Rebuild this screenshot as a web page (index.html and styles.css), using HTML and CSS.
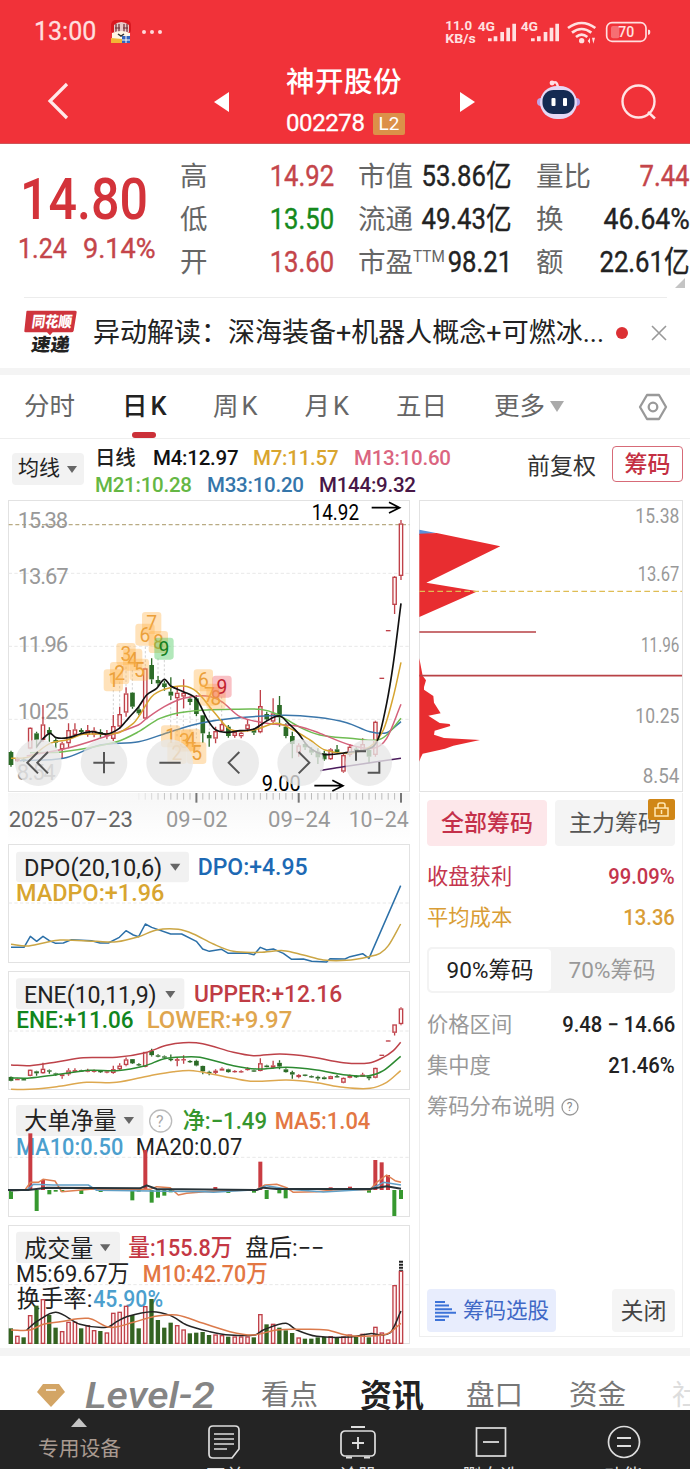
FILE: index.html
```html
<!DOCTYPE html>
<html lang="zh-CN">
<head>
<meta charset="utf-8">
<title>神开股份 002278</title>
<link rel="stylesheet" href="styles.css">
</head>
<body>
<header class="top">
  <div class="status">
    <span class="clock">13:00</span>
    <svg class="app" viewBox="0 0 22 24"><rect x="1" y="0" width="20" height="15" rx="5" fill="#d91820"/><path d="M4 5q7-6 15 0v7H4z" fill="#e9c9c9"/><path d="M6 4v8M9 4v8M14 4v8M17 4v8M5 8h5M13 8h5" stroke="#702c32" stroke-width="1.2"/><path d="M2 13q9-4 18 0v8H2z" fill="#fff5e4"/><path d="M8 14l3 2 3-2" stroke="#333" fill="none" stroke-width="1.5"/><path d="M1 18l11 1v4H1z" fill="#f3b634"/><path d="M12 16h8v7h-8z" fill="#3464bd"/><path d="M12 20h8M16 16v7" stroke="#fff"/></svg>
    <svg class="dots" viewBox="0 0 22 6"><g fill="#ffd9da"><circle cx="3" cy="3" r="2"/><circle cx="11" cy="3" r="2"/><circle cx="19" cy="3" r="2"/></g></svg>
    <svg class="signals" viewBox="295 50 630 90">
      <g fill="#ffe0e0" font-weight="700">
        <text x="302" y="90" font-size="41" textLength="80" lengthAdjust="spacingAndGlyphs">11.0</text>
        <text x="302" y="127" font-size="40" textLength="91" lengthAdjust="spacingAndGlyphs">KB/s</text>
        <text x="399" y="91" font-size="40" textLength="52" lengthAdjust="spacingAndGlyphs">4G</text>
        <text x="528" y="91" font-size="40" textLength="52" lengthAdjust="spacingAndGlyphs">4G</text>
        <path d="M430 114h11v9h-11zM447 108h11v15h-11zM467 95h11v28h-11zM485 82h11v41h-11zM503 70h11v53h-11z"/>
        <path d="M559 114h11v9h-11zM577 108h11v15h-11zM597 95h11v28h-11zM615 82h11v41h-11zM632 70h11v53h-11z"/>
        <circle cx="711" cy="121" r="8"/><path d="M729 122l7-10v18zM742 112l9 0-5 18z"/>
        <rect x="799" y="77" width="25" height="37" rx="6" opacity=".35"/>
        <path d="M910 88h3q4 0 4 7t-4 8h-3z"/>
        <text x="821" y="111" font-size="43" font-weight="500" textLength="48" lengthAdjust="spacingAndGlyphs">70</text>
      </g>
      <g fill="none" stroke="#ffe0e0" stroke-width="8"><path d="M670 83q41-30 82 0M682 97q29-22 58 0M694 110q17-14 34 0"/><rect x="786" y="67" width="118" height="56" rx="16" stroke-width="5"/></g>
    </svg>
  </div>
  <nav class="nav">
    <svg class="back" viewBox="0 0 24 40"><path d="M20 3L3 20l17 17" fill="none" stroke="#ffe9e9" stroke-width="3.2"/></svg>
    <svg class="prev" viewBox="0 0 15 20"><path d="M15 0v20L0 10z" fill="#fff"/></svg>
    <div class="name"><h1>神开股份</h1><p><span>002278</span><b>L2</b></p></div>
    <svg class="next" viewBox="0 0 15 20"><path d="M0 0v20L15 10z" fill="#fff"/></svg>
    <svg class="robot" viewBox="0 0 43 40"><path d="M15 4q5-5 6 4" fill="none" stroke="#ffdce4" stroke-width="2.5"/><circle cx="15" cy="3" r="2.4" fill="#ffdce4"/><circle cx="4" cy="22" r="4" fill="#bba3e8"/><circle cx="39" cy="22" r="4" fill="#bba3e8"/><rect x="3" y="6" width="37" height="33" rx="17" fill="#e5d8f5"/><rect x="5.500" y="10" width="32" height="24" rx="11" fill="#152a52"/><rect x="14.500" y="18" width="4" height="8" rx="1" fill="#fff"/><rect x="26" y="18" width="4" height="8" rx="1" fill="#fff"/></svg>
    <svg class="search" viewBox="0 0 36 36"><circle cx="17.500" cy="17.500" r="16" fill="none" stroke="#ffe4e4" stroke-width="2.400"/><path d="M27 28l7 6.500" stroke="#ffe4e4" stroke-width="2.400"/></svg>
  </nav>
</header>

<section class="quote">
  <div class="last">
    <div class="price"><span>14.80</span></div>
    <div class="change"><span class="c1">1.24</span><span class="c2">9.14%</span></div>
  </div>
  <dl class="facts">
    <div><dt>高</dt><dd class="up">14.92</dd></div><div><dt>市值</dt><dd>53.86亿</dd></div><div><dt>量比</dt><dd class="up">7.44</dd></div>
    <div><dt>低</dt><dd class="down">13.50</dd></div><div><dt>流通</dt><dd>49.43亿</dd></div><div><dt>换</dt><dd class="wide">46.64%</dd></div>
    <div><dt>开</dt><dd class="up">13.60</dd></div><div><dt>市盈<sup>TTM</sup></dt><dd>98.21</dd></div><div><dt>额</dt><dd>22.61亿</dd></div>
  </dl>
  <i class="corner"></i>
</section>

<section class="news">
  <svg class="newslogo" viewBox="0 0 159 132"><path d="M9 2h145q5 0 4 5l-9 55q-1 5-7 5H86l-8 9-9-9H5q-5 0-4-5l6-55q0-5 2-5z" fill="#cf343d"/><g font-weight="900" transform="skewX(-8)"><text x="29" y="52" font-size="45" fill="#fff" textLength="120" lengthAdjust="spacingAndGlyphs">同花顺</text><text x="37" y="124" font-size="54" fill="#222" textLength="116" lengthAdjust="spacingAndGlyphs">速递</text></g></svg>
  <p>异动解读：深海装备+机器人概念+可燃冰...</p><i class="reddot"></i>
  <svg class="close" viewBox="0 0 14 14"><path d="M0 0l14 14M14 0L0 14" stroke="#999" stroke-width="1.600"/></svg>
</section>

<nav class="periods">
  <a>分时</a><a class="on">日K</a><a class="k">周K</a><a class="k">月K</a><a class="five">五日</a><a class="more">更多</a><i class="tri big"></i>
  <svg class="hex" viewBox="0 0 28 28"><path d="M8 2h12l7 12-7 12H8L1 14z" fill="none" stroke="#999" stroke-width="2.300" stroke-linejoin="round"/><circle cx="14" cy="14" r="4.300" fill="none" stroke="#999" stroke-width="2.300"/></svg>
</nav>

<section class="legend">
  <div class="pick">均线<i class="tri"></i></div>
  <div class="mas">
    <div><span class="cn">日线</span><span class="m4">M4:12.97</span><span class="m7">M7:11.57</span><span class="m13">M13:10.60</span></div>
    <div><span class="m21">M21:10.28</span><span class="m33">M33:10.20</span><span class="m144">M144:9.32</span></div>
  </div>
  <span class="adj">前复权</span><span class="chipbtn">筹码</span>
</section>

<main class="body">
  <div class="left">
    <svg class="kline" viewBox="24 180 1206 879">
      <rect x="25.500" y="181.500" width="1203" height="873" class="frame"/>
      <path d="M26 400H1228M26 619H1228M26 838H1228" class="grid"/>
      <path d="M26 254H1228" stroke="#b9ab83" stroke-width="4" stroke-dasharray="12 8"/>
      <g fill="#999" font-size="66"><text x="53" y="263" textLength="151">15.38</text><text x="53" y="432" textLength="153">13.67</text><text x="53" y="636" textLength="151">11.96</text><text x="53" y="837" textLength="153">10.25</text><text x="50" y="1021" textLength="117">8.54</text></g>
      <path d="M340 750v100M359 725v90M378 680v70M397 690v65M436 620v60M474 655v60M493 660v60M512 775v90M531 830v60M550 800v80M570 790v90M589 825v70M628 800v70M665 770v70" stroke="#bbb" stroke-width="2" stroke-dasharray="7 6"/>
      <g id="candles"></g><g id="averages"></g><g id="marks"></g>
      <g fill="#000" font-size="66"><text x="935" y="241" textLength="142" lengthAdjust="spacingAndGlyphs">14.92</text><text x="785" y="1053" textLength="117" lengthAdjust="spacingAndGlyphs">9.00</text></g>
      <path d="M1115 203h84m-32-16l32 16-32 16M943 1037h86m-32-16l32 16-32 16" fill="none" stroke="#000" stroke-width="5"/>
      <g fill="#e7e7e7" fill-opacity=".78"><circle cx="115" cy="968" r="70"/><circle cx="312" cy="968" r="70"/><circle cx="509" cy="968" r="70"/><circle cx="707" cy="968" r="70"/><circle cx="902" cy="968" r="70"/><circle cx="1106" cy="968" r="70"/></g>
      <path d="M114 936l-32 32 32 32M144 936l-32 32 32 32M280 968h64M312 936v64M478 968h64M718 936l-32 32 32 32M896 936l32 32-32 32M1068 962v-28h30M1138 966v32h-35" fill="none" stroke="#555" stroke-width="6"/>
    </svg>
    <svg class="axis" viewBox="24 1056 1206 153"><g id="ticks"></g><g font-size="66" fill="#999"><text x="26" y="1159" fill="#666" textLength="373" lengthAdjust="spacingAndGlyphs">2025−07−23</text><text x="498" y="1159" textLength="185" lengthAdjust="spacingAndGlyphs">09−02</text><text x="804" y="1159" textLength="187" lengthAdjust="spacingAndGlyphs">09−24</text><text x="1046" y="1159" textLength="180" lengthAdjust="spacingAndGlyphs">10−24</text></g></svg>
    <svg class="panel" viewBox="24 10 1206 357">
      <rect x="25.500" y="11.500" width="1203" height="354" class="frame"/><path d="M26 187H1228" class="grid"/>
      <rect x="48" y="33" width="519" height="92" rx="10" class="tag"/><path d="M510 69h31l-15 21z" fill="#666"/>
      <g id="dpo"></g>
      <g font-size="70"><text x="72" y="107" fill="#222" textLength="415" lengthAdjust="spacingAndGlyphs">DPO(20,10,6)</text><text x="593" y="103" class="lab" fill="#1d69b4" textLength="330" lengthAdjust="spacingAndGlyphs">DPO:+4.95</text><text x="48" y="181" class="lab" fill="#d8a530" textLength="445" lengthAdjust="spacingAndGlyphs">MADPO:+1.96</text></g>
    </svg>
    <svg class="panel" viewBox="24 391 1206 357">
      <rect x="25.500" y="392.500" width="1203" height="354" class="frame"/><path d="M26 571H1228" class="grid"/>
      <rect x="48" y="413" width="505" height="93" rx="10" class="tag"/><path d="M496 451h30l-15 21z" fill="#666"/>
      <g id="ene"></g>
      <g font-size="70"><text x="72" y="488" fill="#222" textLength="398" lengthAdjust="spacingAndGlyphs">ENE(10,11,9)</text><text x="582" y="485" class="lab" fill="#c03c45" textLength="445" lengthAdjust="spacingAndGlyphs">UPPER:+12.16</text><text x="49" y="563" class="lab" fill="#11861d" textLength="352" lengthAdjust="spacingAndGlyphs">ENE:+11.06</text><text x="440" y="563" class="lab" fill="#dfa64e" textLength="437" lengthAdjust="spacingAndGlyphs">LOWER:+9.97</text></g>
    </svg>
    <svg class="panel" viewBox="24 9 1206 357">
      <rect x="25.500" y="10.500" width="1203" height="354" class="frame"/><path d="M26 187H1228" class="grid"/>
      <rect x="48" y="30" width="382" height="93" rx="10" class="tag"/><path d="M371 66h31l-15 21z" fill="#666"/>
      <circle cx="482" cy="78" r="33" fill="none" stroke="#bbb" stroke-width="4"/><text x="468" y="95" font-size="48" fill="#aaa">?</text>
      <g font-size="70"><text x="73" y="103" fill="#222" textLength="277" lengthAdjust="spacingAndGlyphs">大单净量</text><text x="548" y="102" class="lab" fill="#36962e" textLength="253" lengthAdjust="spacingAndGlyphs">净:−1.49</text><text x="824" y="102" class="lab" fill="#e37743" textLength="287" lengthAdjust="spacingAndGlyphs">MA5:1.04</text><text x="48" y="180" class="lab" fill="#4c9fce" textLength="322" lengthAdjust="spacingAndGlyphs">MA10:0.50</text><text x="407" y="180" fill="#222" textLength="320" lengthAdjust="spacingAndGlyphs">MA20:0.07</text></g>
      <g id="flow"></g>
    </svg>
    <svg class="panel" viewBox="24 390 1206 357">
      <rect x="25.500" y="391.500" width="1203" height="354" class="frame"/><path d="M26 569H1228" class="grid"/>
      <rect x="48" y="410" width="312" height="94" rx="10" class="tag"/><path d="M300 448h31l-15 21z" fill="#666"/>
      <g font-size="70"><text x="73" y="485" fill="#222" textLength="207" lengthAdjust="spacingAndGlyphs">成交量</text><text x="385" y="484" class="lab" fill="#c43844" textLength="312" lengthAdjust="spacingAndGlyphs">量:155.8万</text><text x="736" y="484" fill="#222" textLength="237" lengthAdjust="spacingAndGlyphs">盘后:−−</text><text x="48" y="560" fill="#222" textLength="340" lengthAdjust="spacingAndGlyphs">M5:69.67万</text><text x="428" y="560" class="lab" fill="#e37743" textLength="375" lengthAdjust="spacingAndGlyphs">M10:42.70万</text><text x="50" y="637" fill="#222" textLength="227" lengthAdjust="spacingAndGlyphs">换手率:</text><text x="280" y="637" class="lab" fill="#4c9fce" textLength="209" lengthAdjust="spacingAndGlyphs">45.90%</text></g>
      <g id="volume"></g>
    </svg>
  </div>

  <aside class="right">
    <svg class="dist" viewBox="27 180 795 879">
      <rect x="28.500" y="181.500" width="789" height="873" class="frame"/>
      <path d="M28 269l50 10-50 6z" fill="#5b8fd8"/>
      <path d="M28 281l52-2 191 40L49 428l154 26L28 531z" fill="#e82d30"/>
      <path d="M28 655l10 52 10 14-6 20v8l28 19 2 20 20 32-37 7 34 22 30 3 2 6-47 14-2 12 30 10 108 6-80 17-25 9-67 15-6 12-4 12z" fill="#e82d30"/>
      <path d="M28 576h350M28 707h788" stroke="#b84246" stroke-width="5"/>
      <path d="M28 454h788" stroke="#dfbd54" stroke-width="4" stroke-dasharray="17 10"/>
      <g fill="#999" font-size="59"><text x="676" y="248" textLength="132" lengthAdjust="spacingAndGlyphs">15.38</text><text x="683" y="424" textLength="125" lengthAdjust="spacingAndGlyphs">13.67</text><text x="693" y="636" textLength="115" lengthAdjust="spacingAndGlyphs">11.96</text><text x="676" y="850" textLength="132" lengthAdjust="spacingAndGlyphs">10.25</text><text x="698" y="1028" textLength="110" lengthAdjust="spacingAndGlyphs">8.54</text></g>
    </svg>
    <div class="chips">
      <div class="scope"><span class="all">全部筹码</span><span class="main">主力筹码<svg class="lock" viewBox="0 0 27 21"><rect width="27" height="21" rx="2" fill="#d08616"/><path d="M7 9h13v8H7zM10 9V6q0-2 2-2h3q2 0 2 2v3M13.500 11v4" fill="none" stroke="#ffe8b4" stroke-width="1.500"/></svg></span></div>
      <div class="row red"><span>收盘获利</span><b>99.09%</b></div>
      <div class="row gold"><span>平均成本</span><b>13.36</b></div>
      <div class="seg"><span class="sel">90%筹码</span><span>70%筹码</span></div>
      <div class="row"><span>价格区间</span><b>9.48 − 14.66</b></div>
      <div class="row"><span>集中度</span><b>21.46%</b></div>
      <div class="row help"><span>筹码分布说明</span><svg viewBox="0 0 18 18"><circle cx="9" cy="9" r="8" fill="none" stroke="#999" stroke-width="1.300"/><text x="5.800" y="13" font-size="12" fill="#888">?</text></svg></div>
      <div class="foot"><span class="screen"><svg viewBox="0 0 22 20"><path d="M0 1h10M0 4.600h14M0 8.200h17M0 11.800h21M0 15.400h14M0 19h10" stroke="#3d73d8" stroke-width="2"/></svg>筹码选股</span><span class="shut">关闭</span></div>
    </div>
  </aside>
</main>

<nav class="info">
  <svg class="gem" viewBox="0 0 28 23"><path d="M6 0h16l6 8-14 15L0 8z" fill="#d3a565"/><path d="M9 6h10" stroke="#fff" stroke-width="1.500"/></svg>
  <svg class="level" viewBox="0 0 132 30"><text x="0" y="27" font-size="36" font-weight="500" font-style="italic" fill="#858585" textLength="130" lengthAdjust="spacingAndGlyphs">Level-2</text></svg>
  <a>看点</a><a class="cur">资讯</a><a>盘口</a><a>资金</a><a class="faded">社</a>
</nav>

<footer class="dock">
  <div class="device"><i></i><span>专用设备</span></div>
  <div class="cell"><svg viewBox="0 0 36 34"><path d="M6 1h22q4 0 4 4v19l-7 9H6q-4 0-4-4V5q0-4 4-4zM7 9h20M7 14h20M7 19h20M7 24h13" fill="none" stroke="#ddd" stroke-width="1.700"/></svg><span>下单</span></div>
  <div class="cell"><svg viewBox="0 0 36 34"><rect x="1" y="6" width="34" height="25" rx="4" fill="none" stroke="#ddd" stroke-width="1.700"/><path d="M11 2h14M18 12v12M12 18h12M6 32.500h6M24 32.500h6" fill="none" stroke="#ddd" stroke-width="1.900"/></svg><span>诊股</span></div>
  <div class="cell"><svg viewBox="0 0 36 34"><rect x="3.500" y="3" width="29" height="28" fill="none" stroke="#ddd" stroke-width="1.700"/><path d="M10 17h16" stroke="#ddd" stroke-width="1.800"/></svg><span>删自选</span></div>
  <div class="cell"><svg viewBox="0 0 36 34"><circle cx="18" cy="17" r="15.500" fill="none" stroke="#ddd" stroke-width="1.700"/><path d="M11 13h14M11 21h14" stroke="#ddd" stroke-width="1.800"/></svg><span>功能</span></div>
</footer>
<script src="charts.js"></script>
</body>
</html>
```
FILE: styles.css
```css
* { box-sizing: border-box; }
body { margin: 0; width: 690px; height: 1469px; overflow: hidden; background: #fff; color: #222; font-family: Roboto, "Noto Sans CJK SC", sans-serif; line-height: 1.2; }
svg { display: block; flex: none; overflow: visible; }
svg text { font-family: Roboto, "Noto Sans CJK SC", sans-serif; white-space: pre; }
h1, p, dl, dd, dt { margin: 0; font-weight: 400; }
span, a, p, dt, dd, b { white-space: nowrap; }

.top { height: 144px; background: #f13239; color: #fff; border-bottom: 1px solid #cf5558; }
.status { height: 62px; display: flex; align-items: center; padding: 2px 0 0 34px; }
.clock { width: 76px; font-size: 25px; color: #ffdfdf; -webkit-text-stroke: .3px; }
.app { width: 22px; height: 24px; }
.dots { width: 22px; height: 6px; margin-left: 9px; }
.signals { width: 210px; height: 30px; margin-left: 280px; }
.nav { height: 81px; display: flex; align-items: center; padding-left: 47px; }
.back { width: 24px; height: 40px; margin-top: -4px; }
.prev { width: 15px; height: 20px; margin: -2px 0 0 143px; }
.name { width: 119px; margin-left: 57px; }
.name h1 { font-size: 28.500px; line-height: 42px; font-weight: 500; letter-spacing: .5px; }
.name p { display: flex; align-items: center; height: 40px; font-size: 24px; }
.name p span { width: 87px; letter-spacing: -.4px; -webkit-text-stroke: .3px; }
.name b { width: 32px; height: 22px; line-height: 22px; border-radius: 2px; background: #dc9049; text-align: center; font-size: 19px; font-weight: 400; }
.next { width: 15px; height: 20px; margin: -2px 0 0 55px; }
.robot { width: 43px; height: 40px; margin: -5px 0 0 62px; }
.search { width: 36px; height: 36px; margin: -1px 0 0 41px; }

.quote { position: relative; height: 153px; display: flex; padding-top: 11px; }
.last { width: 180px; color: #c9353c; }
.price { height: 88px; padding-left: 20px; line-height: 90px; font-size: 57px; font-weight: 500; color: #d3333a; }
.price span { display: inline-block; transform: scaleX(.88); transform-origin: left; }
.change { height: 26px; display: flex; padding-left: 18px; line-height: 12px; font-size: 28.500px; color: #c4454a; -webkit-text-stroke: .4px; }
.change span { transform-origin: left; }
.c1 { width: 65px; transform: scaleX(.88); }
.c2 { transform: scaleX(.95); }
.facts { width: 510px; display: grid; grid-template-columns: repeat(3, 154px); column-gap: 24px; grid-auto-rows: 43px; line-height: 43px; }
.facts div { display: flex; justify-content: space-between; }
.facts dt { width: 0; flex: none; font-size: 27.500px; color: #666; }
.facts sup { display: inline-block; font-size: 17px; vertical-align: 10px; line-height: 1; transform: scaleX(.9); transform-origin: left; }
.facts dd { font-size: 29.500px; transform: scaleX(.87); transform-origin: right; -webkit-text-stroke: .4px; }
.facts .wide { transform: scaleX(.9); }
.up { color: #c4454a; }
.down { color: #15891c; }
.corner { position: absolute; right: 5px; bottom: 9px; border-left: 10px solid transparent; border-bottom: 10px solid #c4c4c4; }

.news { height: 71px; display: flex; align-items: center; margin-left: 24px; }
.news::before { content: ""; width: 643px; height: 1px; margin-right: -643px; align-self: flex-start; background: #ececec; }
.newslogo { width: 53px; height: 44px; margin-top: -2px; }
.news p { width: 523px; margin-left: 16px; padding-top: 1px; font-size: 27px; }
.reddot { width: 12px; height: 12px; border-radius: 50%; background: #dc3034; }
.close { width: 14px; height: 14px; margin-left: 24px; }

.periods { height: 71px; display: flex; align-items: center; padding-left: 24px; border-top: 7px solid #f4f4f4; border-bottom: 1px solid #eee; font-size: 25.500px; color: #666; }
.periods a { width: 98px; }
.periods .on { position: relative; width: 91px; color: #222; font-weight: 500; letter-spacing: 3px; }
.periods .on::after { content: ""; position: absolute; left: 10px; bottom: -16px; width: 24px; height: 6px; border-radius: 3px; background: #cb3038; }
.periods .k { width: 91.500px; letter-spacing: 3px; }
.periods .five { width: 98px; }
.periods .more { width: 56px; }
.tri { width: 0; height: 0; border: 5px solid transparent; border-top: 7px solid #666; border-bottom: 0; }
.tri.big { border-width: 11px 7px 0; border-top-color: #aaa; }
.hex { width: 28px; height: 28px; margin-left: 75px; }

.legend { height: 61px; display: flex; padding-left: 12px; }
.legend > * { flex: none; }
.pick { width: 72px; height: 32px; margin-top: 14px; padding-left: 6px; border-radius: 4px; background: #f2f2f2; display: flex; align-items: center; gap: 7px; font-size: 21px; white-space: nowrap; }
.mas { width: 443px; padding: 6px 0 0 11px; font-size: 20.500px; font-weight: 500; letter-spacing: -.25px; }
.mas div { display: flex; height: 27px; line-height: 27px; gap: 15px; }
.mas .cn { width: 43px; font-weight: 500; }
.m4 { color: #111; width: 85px; } .m7 { color: #d9a52e; width: 86px; } .m13 { color: #db6580; }
.m21 { color: #65b744; width: 97px; } .m33 { color: #3576aa; width: 97px; } .m144 { color: #481747; }
.adj { margin-top: 14px; font-size: 23px; color: #333; width: 85px; }
.chipbtn { width: 71px; height: 36px; margin-top: 7px; line-height: 36px; text-align: center; border: 1px solid #d76b78; border-radius: 4px; color: #c42f42; font-size: 23px; font-weight: 500; }

.body { display: flex; height: 848px; padding-left: 8px; gap: 9px; }
.left { width: 402px; }
.kline { width: 402px; height: 293px; }
.axis { width: 402px; height: 51px; background: linear-gradient(#f7f7f7, #fff); }
.panel { width: 402px; height: 119px; margin-bottom: 8px; }
.frame { fill: none; stroke: #e2e2e2; stroke-width: 3; }
.grid { stroke: #e8e8e8; stroke-width: 3; stroke-dasharray: 10 7; fill: none; }
.tag { fill: #f1f1f1; }
.panel text { stroke-width: .9; stroke: currentColor; stroke-opacity: 0; }
.panel .lab { font-weight: 500; }
.right { width: 265px; }
.dist { width: 265px; height: 293px; }
.chips { width: 264px; height: 544px; border: 1px solid #eee; border-top: 0; padding: 7px 7px 0; }
.scope { display: flex; justify-content: space-between; font-size: 23px; line-height: 48px; text-align: center; margin-bottom: 10px; }
.scope span { width: 120px; height: 46px; border-radius: 4px; }
.all { background: #fde7ea; color: #c4304a; font-weight: 500; }
.main { position: relative; background: #f4f4f4; color: #555; }
.lock { position: absolute; right: 0; top: -1px; width: 27px; height: 21px; }
.row { height: 41px; display: flex; align-items: center; justify-content: space-between; font-size: 21.300px; color: #999; }
.row b { font-weight: 500; font-size: 21.500px; color: #222; transform: scaleX(.94); transform-origin: right; }
.row.red, .row.red b { color: #c4354d; }
.row.gold, .row.gold b { color: #d99d36; }
.seg { height: 46px; margin: 9px 0 11px; padding: 2px; display: flex; border-radius: 5px; background: #f3f3f3; font-size: 22.500px; line-height: 43px; text-align: center; color: #999; }
.seg span { flex: 1; }
.seg .sel { background: #fff; border-radius: 4px; color: #222; }
.help { justify-content: flex-start; gap: 6px; }
.help svg { width: 18px; height: 18px; }
.foot { display: flex; justify-content: space-between; margin-top: 162px; font-size: 21.500px; line-height: 45px; }
.screen { width: 129px; height: 43px; display: flex; align-items: center; gap: 6px; padding-left: 8px; border-radius: 4px; background: #e8edfd; color: #4068c6; }
.screen svg { width: 22px; height: 20px; }
.shut { width: 63px; height: 43px; border-radius: 4px; background: #f5f5f5; text-align: center; font-size: 23px; color: #444; }

.info { height: 62px; display: flex; padding-left: 37px; border-top: 8px solid #f4f4f4; font-size: 28.500px; line-height: 80px; color: #777; overflow: hidden; }
.gem { width: 28px; height: 23px; margin-top: 28px; }
.level { width: 132px; height: 30px; margin: 25px 0 0 20px; }
.info a { flex: none; width: 103px; }
.info .level + a { width: 99px; margin-left: 44px; }
.info .cur { width: 106px; font-size: 32px; font-weight: 700; color: #222; }
.info .faded { color: #ddd; }

.dock { height: 59px; display: flex; background: #242424; color: #ddd; overflow: hidden; }
.device { width: 159px; display: flex; flex-direction: column; align-items: center; color: #a99a90; font-size: 20.800px; line-height: 45px; padding-top: 8px; }
.device i { border: 8px solid transparent; border-top: 0; border-bottom: 9px solid #c4c4c4; }
.cell { width: 132.800px; display: flex; flex-direction: column; align-items: center; padding-top: 15px; font-size: 19px; }
.cell svg { width: 36px; height: 34px; }
.cell span { margin-top: 4px; line-height: 28px; }
```
FILE: charts.js
```js
// Candles: [direction, high, body top, body bottom, low]; one every STEP units.
const START = 33, STEP = 19.18;
const UP = '#bf4149', DOWN = '#2c6b27';
const candles = [
  ['g',932,936,975,980],['r',952,956,964,966],['g',955,958,962,966],['r',862,863,926,928],['g',875,880,900,925],
  ['r',795,853,900,905],['g',862,870,880,905],['g',895,900,908,925],['r',905,910,928,955],['r',850,870,910,925],
  ['r',850,868,885,890],['g',865,870,876,882],['r',855,870,884,890],['r',862,872,884,892],['g',868,876,881,893],
  ['r',870,880,889,898],['r',825,858,897,903],['r',800,822,860,866],['r',742,760,818,830],['g',757,758,800,806],
  ['g',800,808,820,826],['r',683,685,836,838],['g',655,675,718,732],['g',708,720,730,738],['g',722,730,741,752],
  ['g',712,755,767,780],['r',740,758,775,828],['r',718,758,770,805],['g',770,776,786,795],['g',765,775,822,828],
  ['g',825,826,880,908],['g',875,885,895,920],['r',860,873,896,910],['r',840,852,873,875],['g',855,860,888,893],
  ['r',870,876,888,893],['r',870,878,889,895],['r',840,853,868,875],['g',865,870,878,885],['r',750,798,877,880],
  ['g',815,822,838,842],['r',775,820,845,855],['g',768,795,832,860],['g',850,860,888,895],['g',875,888,912,955],
  ['r',910,916,938,950],['g',908,912,922,930],['g',922,928,938,945],['g',925,935,952,972],['g',932,940,958,962],
  ['r',925,928,958,960],['g',915,928,936,940],['r',940,945,995,998],['r',912,920,945,950],['g',918,926,936,944],
  ['r',895,912,934,936],['g',925,930,950,970],['r',842,845,945,950],['r',713,713,716,717],['r',570,570,572,573],
  ['r',408,410,495,522],['r',240,250,408,420]
];
const el = id => document.getElementById(id);
const xAt = i => START + i * STEP;
const rect = (x, y, w, h, fill, stroke) =>
  `<rect x="${x}" y="${y}" width="${w}" height="${Math.max(h, 0)}" fill="${fill}"${stroke ? ` stroke="${stroke}" stroke-width="4"` : ''}/>`;
const line = (pts, color, width = 4.5) =>
  `<polyline points="${pts}" fill="none" stroke="${color}" stroke-width="${width}" stroke-linejoin="round"/>`;

function curve(text, color, width = 4.5) {
  const p = text.split(' ').map(s => s.split(',').map(Number));
  let d = `M${p[0]}`;
  for (let i = 0; i < p.length - 1; i++) {
    const a = p[i - 1] || p[i], b = p[i], c = p[i + 1], e = p[i + 2] || c;
    const k = (c[0] - b[0]) / 3;
    const s1 = (c[1] - a[1]) / (c[0] - a[0]), s2 = (e[1] - b[1]) / (e[0] - b[0]);
    d += `C${b[0] + k},${b[1] + s1 * k} ${c[0] - k},${c[1] - s2 * k} ${c}`;
  }
  return `<path d="${d}" fill="none" stroke="${color}" stroke-width="${width}"/>`;
}

function drawCandles(mapY, half) {
  return candles.map(([dir, hi, top, bot, lo], i) => {
    const x = xAt(i), c = dir === 'r' ? UP : DOWN;
    const t = mapY(top), b = mapY(bot);
    const wick = `<path d="M${x} ${mapY(hi)}V${t}M${x} ${b}V${mapY(lo)}" stroke="${c}" stroke-width="4"/>`;
    const small = b - t < 5;
    const body = dir === 'r' && !small
      ? rect(x - half + 2, t + 2, half * 2 - 4, b - t - 4, '#fff4f4', c)
      : rect(x - half, t, half * 2, Math.max(b - t, 4), c);
    return wick + body;
  }).join('');
}

el('candles').innerHTML = drawCandles(y => y, 7);
el('averages').innerHTML =
  curve('60,962 190,955 300,915 416,905 512,875 600,850 700,835 850,826 950,832 1040,848 1110,875 1160,878 1203,845', '#3a76aa') +
  curve('90,938 190,935 350,905 416,875 480,835 560,815 700,808 780,808 830,822 900,862 960,885 1050,895 1130,900 1160,885 1203,835', '#6fbc52') +
  curve('80,948 200,925 300,895 415,855 440,835 493,800 550,775 620,768 665,785 720,830 800,850 900,860 960,880 1050,915 1120,925 1160,895 1203,793', '#d4617b') +
  curve('33,955 90,950 150,910 200,900 250,883 350,880 400,850 416,830 455,770 493,748 550,738 590,755 645,820 690,868 760,870 830,850 880,870 930,900 975,930 1050,940 1110,920 1150,870 1180,770 1203,667', '#d6a42f') +
  curve('110,920 130,895 150,880 168,893 205,893 240,882 275,875 320,882 358,865 385,835 416,800 440,765 470,745 493,718 512,738 550,755 590,778 620,835 645,868 680,877 720,872 760,868 805,840 840,828 865,850 895,880 925,920 970,943 1045,937 1110,925 1135,895 1160,790 1180,670 1203,490', '#111', 5) +
  curve('960,992 1030,980 1203,955', '#4a1b5c');

// Sequence counters above and below the candles.
const marks = [[455,550,7],[435,585,6],[475,607,8],[378,643,3],[398,660,4],[418,690,5],[359,700,2],[340,722,1],
  [512,890,1],[531,940,2],[553,903,3],[572,900,4],[590,940,5],[610,722,6],[628,765,7],[648,775,8],
  [492,627,9,'#35c34a','#15801f'],[666,741,9,'#ee5d67','#c2222e']];
el('marks').innerHTML = marks.map(([x, y, n, bg = '#ffb24a', fg = '#eba03a']) =>
  `<rect x="${x - 29}" y="${y - 34}" width="58" height="66" rx="10" fill="${bg}" opacity=".38"/>` +
  `<text x="${x}" y="${y + 20}" font-size="58" text-anchor="middle" fill="${fg}">${n}</text>`).join('');

el('ticks').innerHTML = candles.map((_, i) => {
  if (i < 20) return '';
  const major = i === 29 || i === 45 || i === 61;
  return `<path d="M${xAt(i)} 1056v${major ? 29 : 20}" stroke="${major ? '#777' : '#bbb'}" stroke-width="${major ? 6 : 3}" opacity="${major ? 1 : Math.min(1, (i - 19) / 6)}"/>`;
}).join('');

el('dpo').innerHTML =
  line('33,320 72,320 91,287 110,302 129,287 148,300 167,308 190,307 215,297 275,300 300,307 325,307 358,290 378,270 400,283 416,288 436,250 455,260 512,280 545,280 589,302 608,325 628,332 665,326 685,338 740,337 762,342 781,320 800,328 820,325 850,338 875,356 910,355 935,362 980,364 990,354 1035,355 1050,348 1088,339 1107,353 1202,135', '#2c70a8') +
  curve('33,311 80,316 130,307 180,298 290,302 350,303 416,288 470,268 535,266 580,280 640,310 700,332 780,335 850,330 910,343 970,358 1040,359 1107,348 1140,338 1165,315 1202,250', '#cba645');

el('ene').innerHTML = drawCandles(y => 503 + (y - 250) * .3, 7) +
  curve('33,673 90,675 170,664 250,651 350,650 436,636 500,614 550,606 608,609 700,635 760,645 840,640 930,648 1030,666 1107,667 1150,650 1180,630 1202,605', '#bd4249') +
  curve('33,712 90,712 170,702 270,689 350,690 436,675 490,655 550,649 600,650 700,675 770,685 860,680 950,688 1030,702 1107,705 1150,690 1202,647', '#2c8a31') +
  curve('33,746 90,746 170,738 260,725 350,725 450,705 520,693 580,690 700,713 760,722 860,718 950,726 1030,740 1110,743 1160,725 1202,690', '#dda84f');

// Net large orders: [x, value end], measured from the zero line.
const ZERO = 285;
const flow = [[91,115],[129,255],[436,165],[646,276],[781,200],[992,277],[1050,275],[1126,195],[1145,202],[1164,240],
  [33,312],[110,348],[148,298],[167,290],[187,290],[244,297],[302,291],[397,316],[416,290],[455,323],[474,308],[493,302],[512,292],
  [685,294],[762,293],[800,312],[838,295],[857,310],[1107,293],[1183,363],[1203,312]];
el('flow').innerHTML = flow.map(([x, y]) =>
  rect(x - 6, Math.min(y, ZERO), 12, Math.abs(y - ZERO), y < ZERO ? '#c93c42' : '#36982f')).join('') +
  line('33,287 75,285 91,262 115,262 129,253 165,258 185,290 270,283 450,283 470,275 510,278 535,300 560,295 615,290 770,284 795,270 830,268 860,278 880,292 950,290 1000,285 1110,284 1130,262 1160,240 1185,257 1203,262', '#de8053') +
  line('33,287 80,285 100,268 160,270 265,270 290,286 615,290 640,292 770,284 800,272 860,282 970,291 1110,283 1150,262 1203,270', '#609fc6') +
  line('24,285 85,285 140,278 420,280 440,271 470,282 770,285 790,278 830,282 1110,282 1160,274 1203,281', '#28343a', 6);

const vol = [700,722,727,660,632,612,660,698,708,680,680,700,690,705,708,712,653,650,632,660,700,633,612,675,698,683,690,703,715,713,711,
  720,718,720,725,724,724,724,727,657,688,686,698,706,714,727,731,731,727,726,723,728,724,718,725,716,727,695,712,733,570,527];
el('volume').innerHTML = vol.map((y, i) => candles[i][0] === 'r' || i === 1
  ? rect(xAt(i) - 5, y + 2, 10, 743 - y, '#fff1f1', UP)
  : rect(xAt(i) - 7, y, 13, 747 - y, '#346321')).join('') +
  '<path d="M1203 497v30" stroke="#222" stroke-width="12" stroke-dasharray="6 3"/>' +
  curve('80,705 110,680 168,652 240,688 320,697 350,680 380,665 455,650 512,662 560,690 630,710 690,720 765,720 790,705 857,685 890,705 950,724 1050,726 1110,716 1170,714 1203,648', '#252525') +
  curve('33,705 90,705 130,688 180,680 265,670 330,697 400,682 460,665 530,660 610,685 690,710 760,720 830,705 900,703 980,705 1050,722 1160,717 1203,685', '#db7a4b');
```
